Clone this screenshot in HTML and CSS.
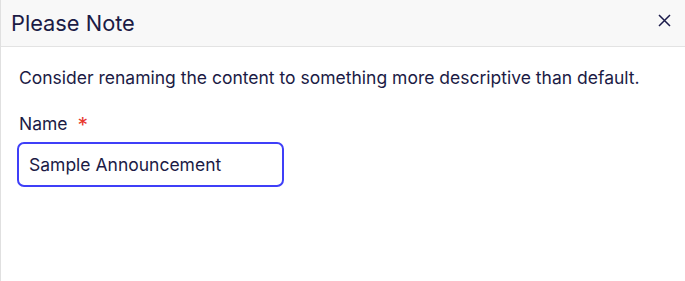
FILE: index.html
```html
<!DOCTYPE html>
<html>
<head>
<meta charset="utf-8">
<link rel="stylesheet" href="styles.css">
</head>
<body>
<div class="dialog">
  <div class="header">
    <h1 class="title">Please Note</h1>
    <button class="close" aria-label="Close">
      <svg width="13" height="13" viewBox="0 0 13 13"><path d="M1 1L12 12M12 1L1 12" stroke="#1b1b4b" stroke-width="1.5" fill="none"/></svg>
    </button>
  </div>
  <div class="body">
    <p class="message">Consider renaming the content to something more descriptive than default.</p>
    <label class="label" for="name">Name <span class="req">*</span></label>
    <input id="name" class="input" type="text" value="Sample Announcement">
  </div>
</div>
</body>
</html>
```
FILE: styles.css
```css
* { box-sizing: border-box; }
html, body { margin: 0; padding: 0; background: #fff; }
body { font-family: Inter, "Noto Sans", sans-serif; color: #1b1b45; }
.dialog {
  width: 685px;
  height: 281px;
  border-left: 1px solid #e0e0e0;
  display: flex;
  flex-direction: column;
}
.header {
  height: 47px;
  background: #f8f8f8;
  border-bottom: 1px solid #e3e3e3;
  display: flex;
  align-items: center;
  justify-content: space-between;
  padding: 0 14px 0 10px;
}
.title {
  margin: 0;
  font-size: 21.8px;
  font-weight: 400;
  color: #1b1b45;
}
.close {
  border: 0;
  background: none;
  padding: 0;
  width: 13px;
  height: 13px;
  display: flex;
  margin-top: -6px;
}
.body {
  padding: 18px 18px 0 16px;
  display: flex;
  flex-direction: column;
  align-items: flex-start;
}
.message {
  margin: 0 0 0 2px;
  font-size: 17.5px;
  line-height: 26px;
}
.label {
  margin: 20px 0 0 2px;
  font-size: 17.5px;
  line-height: 26px;
}
.req { color: #e8372d; margin-left: 5px; font-size: 21px; line-height: 20px; vertical-align: -3px; }
.input {
  margin-top: 5px;
  width: 267px;
  height: 45px;
  border: 2px solid #3f3ff8;
  border-radius: 7px;
  padding: 0 10px;
  font-family: Inter, "Noto Sans", sans-serif;
  font-size: 17.5px;
  color: #1b1b45;
  outline: none;
}
```
